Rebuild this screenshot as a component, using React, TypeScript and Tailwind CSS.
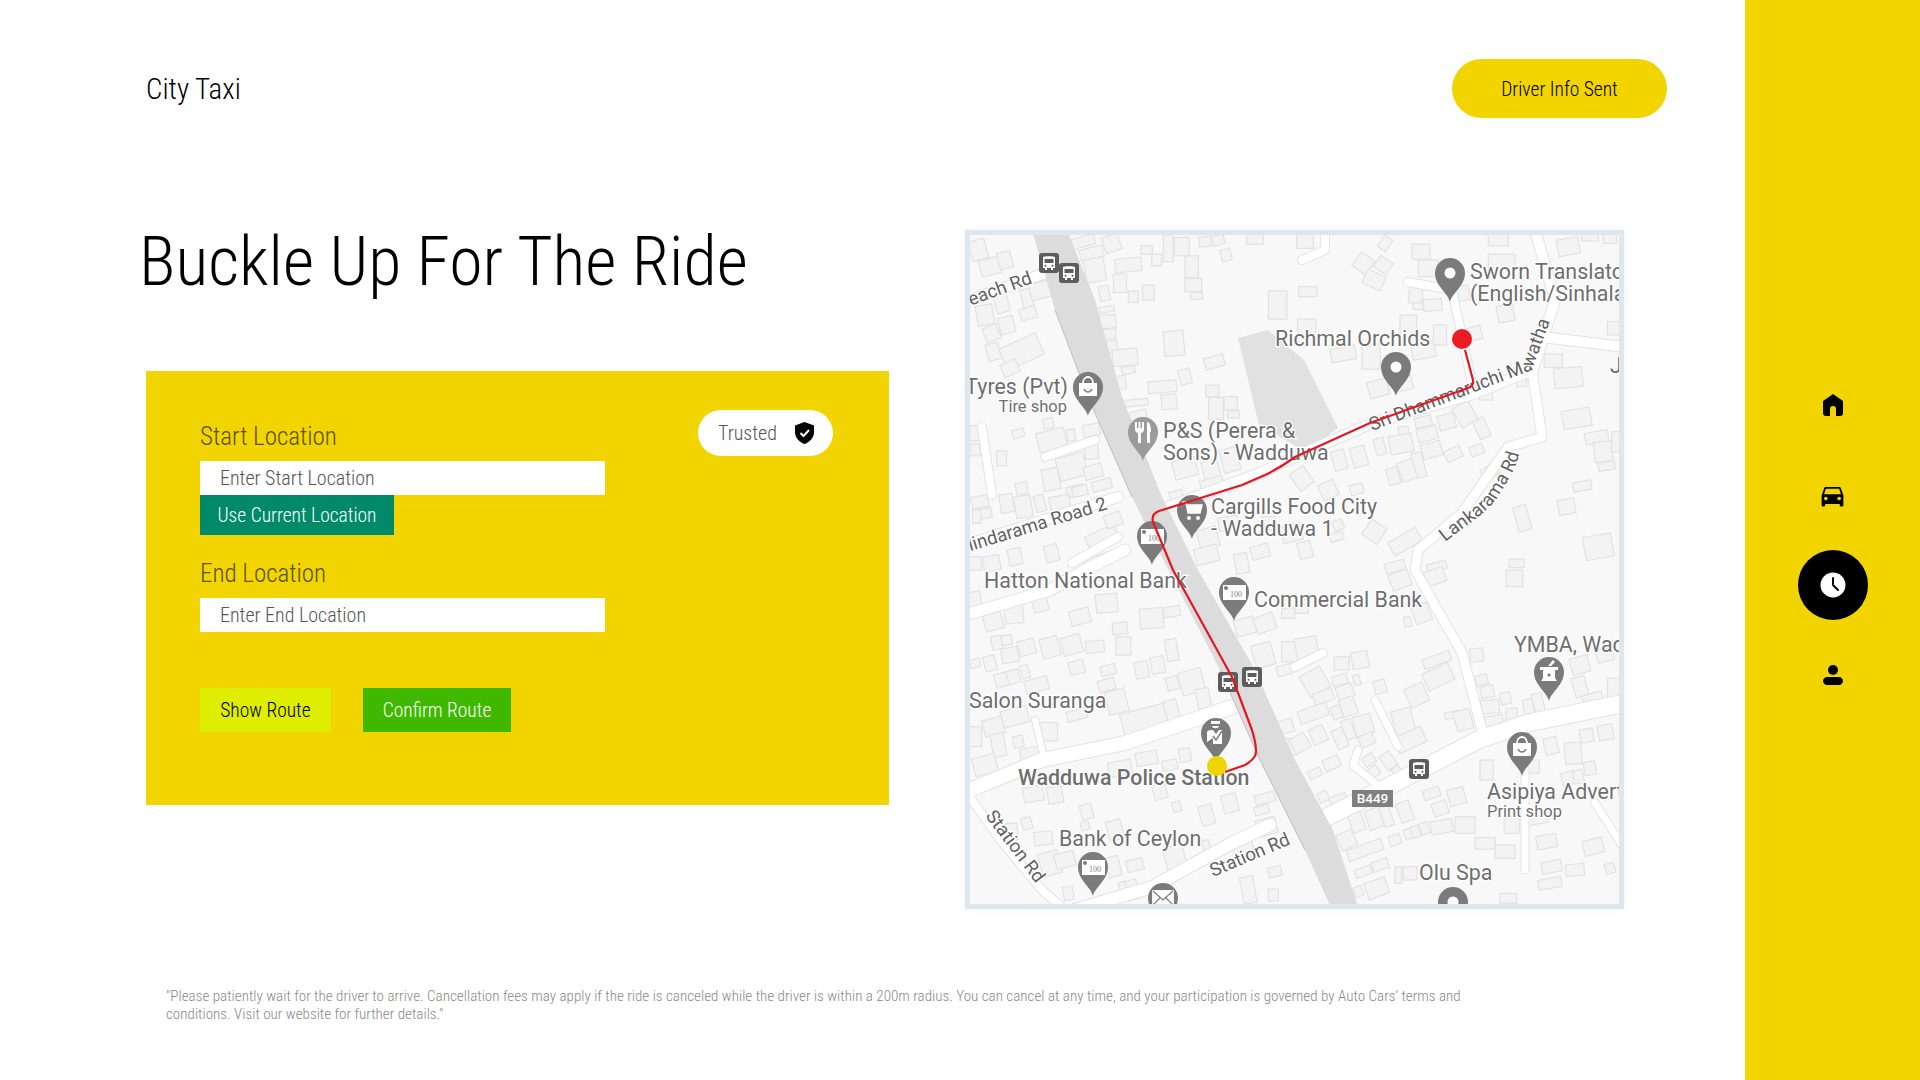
import React from 'react';

const abel = "font-['Roboto'] [font-stretch:75%] font-light";

type Box = [number, number, number, number, number];

// buildings, noted per map quadrant in 3x crop coordinates
const topLeft: Box[] = [
  [40,60,50,60,-15],[75,110,60,50,-15],[120,90,40,50,-15],[60,255,50,60,-10],[125,285,45,50,-15],[80,310,45,45,-20],[85,365,40,50,-15],[170,365,120,70,-25],[135,415,50,40,-25],[110,220,40,55,-15],[185,205,30,55,-15],[190,250,50,35,-15],[230,180,70,50,-15],
  [355,35,70,30,-15],[380,70,70,35,-15],[440,40,50,50,-20],[390,120,60,70,-10],[490,105,80,40,-5],[465,160,40,55,0],[550,188,35,45,0],[505,200,30,35,0],[418,190,30,45,-10],[425,238,45,18,-10],[425,275,55,40,-5],[430,312,45,30,-5],[437,350,40,35,-5],[480,382,75,50,-5],[490,420,40,22,-10],[465,458,35,40,-5],
  [545,60,35,25,0],[575,90,30,35,0],[610,55,30,80,0],[650,50,45,55,0],[680,110,40,65,0],[685,165,50,40,0],[695,198,35,20,0],[720,35,35,30,-5],[760,30,35,30,-15],[783,75,30,35,-15],[870,28,50,30,0],[938,225,55,85,0],
  [627,340,60,75,-5],[748,396,60,35,-15],[660,440,35,45,-15],[592,470,85,35,-5],[612,515,45,45,-5],[742,483,40,35,0],[753,535,45,65,0],[797,520,40,40,0],[805,553,35,22,0],[512,518,75,20,-5],[520,555,50,25,-15],
  [30,610,30,45,0],[30,660,30,35,0],[110,685,30,45,0],[160,610,35,25,-15],[250,580,30,30,-10],[260,630,85,60,-15],[318,615,25,35,-10],[370,638,35,20,-15],[380,600,50,35,-10],[320,710,85,70,-15],[258,748,50,65,-10],[385,725,55,40,-15],[410,765,60,30,-15],[330,782,50,30,-15],[380,665,40,45,-5],
  [660,715,70,55,-15],[740,725,50,70,-15],[795,690,50,70,-15],[635,800,40,35,-15],[740,760,70,30,-15],
  [45,815,50,35,-10],[60,850,40,30,-10],[35,860,25,40,0],[125,820,40,55,-10],[170,775,35,35,-10],[175,830,50,65,-10],[225,820,30,50,-15],[285,820,60,45,-10],[345,783,45,30,-15],
  [410,920,95,40,-25],[445,870,50,40,-20],[405,990,100,30,-20],[730,925,60,60,-15],[725,975,70,50,-15],[830,1000,40,60,-10],[885,965,55,40,-15],[790,880,60,40,-10],[910,880,40,40,0],[980,910,60,50,-15],[80,1000,50,45,-10],[30,1000,40,40,0],[150,980,40,50,-10],[260,970,40,50,-15],
];
const topRight: Box[] = [
  [30,30,50,50,0],[205,100,50,50,35],[265,105,45,40,35],[237,150,60,45,25],[270,40,30,40,35],[38,185,55,30,0],[378,65,55,45,0],[400,115,60,50,0],[362,195,40,50,5],[370,228,30,20,0],[413,225,55,35,-5],[500,190,45,45,-10],[610,30,60,35,0],[620,95,80,45,0],[632,250,50,50,-10],[820,50,65,50,-10],[885,20,50,25,0],[945,25,40,30,0],
  [35,290,55,45,0],[145,372,75,40,-10],[228,380,55,75,0],[340,290,50,70,0],[385,360,70,50,-10],[435,315,40,60,0],[540,310,40,40,-15],[250,475,60,50,-15],[330,460,45,40,-15],
  [775,392,55,40,0],[820,443,85,60,-5],[845,565,85,55,-10],[905,622,70,35,-10],[925,665,55,60,-5],[935,708,50,25,-10],[965,635,30,60,0],[960,295,45,40,0],
  [573,495,40,30,0],[680,455,30,30,0],[455,575,50,45,-15],[385,575,50,30,-15],[510,553,55,65,-30],[560,595,35,60,-25],[325,605,30,30,0],
  [255,650,30,50,-15],[318,642,70,55,-10],[397,612,60,40,-15],[410,660,60,45,-15],[475,672,50,35,-25],[545,660,40,30,-20],
  [340,720,55,60,-20],[295,738,35,50,-15],[372,705,30,75,-15],[585,725,50,35,-30],[133,690,40,60,-15],[192,680,45,60,-15],[20,745,50,60,-35],[100,780,50,50,-25],[185,778,40,30,-15],
  [862,768,55,28,-10],[682,865,40,75,-15],[815,830,50,45,-10],[238,905,55,55,35],[330,935,95,45,-30],[910,950,85,70,-10],[130,885,30,30,-20],[125,920,40,25,-15],[30,960,40,50,-15],[665,1000,45,25,0],[300,1010,60,30,-15],[425,1010,60,25,-15],
];
const bottomLeft: Box[] = [
  [30,100,40,70,-10],[85,155,55,50,-15],[147,130,55,60,-5],[225,100,45,50,-15],[345,140,60,45,-15],[425,100,65,55,-5],[465,175,45,35,-5],[560,145,70,60,-5],[620,125,50,30,-10],
  [95,218,30,40,-10],[125,210,30,30,-10],[135,255,50,45,-10],[185,232,50,45,-15],[255,232,55,60,-15],[320,225,60,55,-15],[390,230,55,35,-5],[475,228,45,55,0],[620,240,35,65,-10],[30,280,30,25,-15],[75,280,35,45,-15],[110,330,40,40,-15],[145,320,35,40,-15],[180,305,25,40,-15],[215,345,70,40,-15],[335,292,45,40,-15],[430,300,45,30,-15],[425,345,50,35,-15],[530,300,40,50,-10],[578,285,40,50,-10],[622,340,35,40,-15],[680,335,70,70,-15],[715,385,40,60,-10],
  [455,395,60,70,-15],[540,450,140,70,-15],[620,420,40,60,-15],[335,435,60,30,-15],[150,440,80,50,-15],[85,470,60,50,-15],[250,485,55,55,0],[30,500,40,60,0],[100,525,40,70,-10],[160,515,30,35,-10],[200,550,70,35,-10],[60,585,70,55,-15],
  [205,672,60,45,-10],[270,675,45,50,-10],[365,725,35,45,-15],[360,768,25,25,-15],[185,760,30,35,-15],[235,805,55,40,-5],[140,785,35,50,-5],
  [465,595,70,45,-10],[545,565,65,40,-10],[615,585,45,30,-10],[660,555,35,40,-10],[585,665,40,45,-15],[635,710,25,30,-15],[725,735,40,60,-15],[795,700,45,55,-15],[890,720,45,25,-15],[900,685,60,30,-15],[905,770,60,50,-15],
  [255,880,60,70,-15],[300,870,60,45,-15],[450,780,45,60,-15],[445,890,40,60,-15],[510,885,50,35,-15],[630,865,60,75,-15],[725,835,20,50,-10],[835,835,60,65,-15],[930,905,40,30,-15],[925,975,30,35,0],[850,960,40,80,-10],[500,960,40,60,-15],[475,960,20,50,-15],[310,970,30,40,-10],[430,990,30,30,-15],
  [895,255,60,70,-15],[975,245,50,60,0],[840,170,60,50,-15],[900,160,60,50,-20],[970,130,40,30,0],[960,300,50,30,-15],[960,470,50,40,-15],[975,530,40,50,0],
];
const bottomRight: Box[] = [
  [20,110,40,40,0],[35,235,65,65,-10],[140,280,45,40,0],[195,270,50,50,-10],[60,335,70,70,-30],[85,380,60,35,-20],[135,330,45,30,-15],[185,330,20,30,-15],[255,350,35,40,-15],[150,365,50,40,-20],[160,410,45,55,-20],[55,430,90,40,-20],[125,427,30,40,-20],[205,465,55,60,-15],[160,478,30,60,-20],[215,510,45,35,-25],[135,505,35,60,-25],[70,495,45,50,-25],[325,455,60,75,-15],[365,375,60,60,-25],[430,320,85,55,-25],[425,270,85,30,-20],[345,510,90,50,-25],[110,580,50,35,-25],[280,572,35,50,-35],[222,570,35,30,-35],[237,605,30,30,-35],[305,603,25,25,-35],
  [15,520,50,50,-30],[60,610,40,25,-25],[85,680,30,30,-25],[130,690,50,30,-20],[185,755,40,60,-20],[240,745,50,60,-20],[275,740,30,60,-20],[330,725,40,60,-20],[410,670,50,30,-20],[485,680,50,50,-15],[435,715,45,40,-20],[210,840,110,35,-20],[155,810,50,50,-25],[255,885,50,30,-20],[205,905,50,25,-20],[245,955,65,50,-20],[190,965,25,30,-20],[310,915,20,50,0],[345,910,40,40,0],[300,810,35,30,-20],[345,790,35,30,-20],[362,785,25,35,-20],[388,775,25,35,-20],[440,770,65,40,-10],[510,765,60,50,0],[570,820,60,35,0],[630,845,60,40,0],
  [338,155,20,30,-10],[380,130,50,55,-20],[545,255,40,40,-5],[560,330,35,30,-15],[577,365,40,35,-10],[585,410,55,40,-5],[595,460,60,45,-10],[632,385,30,35,-10],[650,440,35,50,0],[700,410,30,45,-10],[730,400,30,60,-15],[470,435,40,20,-10],[505,450,50,60,-15],[855,285,55,50,-15],[855,350,40,60,-15],[895,395,60,50,-15],[960,355,45,60,0],[930,255,50,40,-15],[658,25,50,50,0],
  [575,600,40,60,0],[715,590,35,40,0],[768,527,40,50,-15],[835,550,50,65,-5],[820,625,40,40,-15],[850,620,30,40,-10],[885,595,35,40,-10],[875,497,40,40,-10],[932,487,45,45,-10],[755,815,60,40,-10],[770,890,60,35,-10],[840,900,55,35,-5],[765,940,70,30,-10],[895,830,60,45,-15],[945,895,30,30,-15],[650,765,45,50,0],[725,750,70,25,-10],[640,985,50,30,0],[420,20,60,45,-20],[315,30,60,50,-20],
];

const buildings: Box[] = [
  ...topLeft.map(([x, y, w, h, r]): Box => [x / 3, y / 3, w / 3, h / 3, r]),
  ...topRight.map(([x, y, w, h, r]): Box => [330 + x / 3, y / 3, w / 3, h / 3, r]),
  ...bottomLeft.map(([x, y, w, h, r]): Box => [x / 3, 340 + y / 3, w / 3, h / 3, r]),
  ...bottomRight.map(([x, y, w, h, r]): Box => [330 + x / 3, 340 + y / 3, w / 3, h / 3, r]),
];

const roads: [string, number][] = [
  ['M0 72 L83 42', 10],
  ['M0 315 L153 267', 10],
  ['M17 197 L27 265', 8],
  ['M80 227 L130 210', 8],
  ['M107 333 L153 307', 8],
  ['M195 280 L290 245 L330 227 L407 193 L505 165 L568 140 L590 70 L570 0', 10],
  ['M443 52 L487 60 L507 153', 8],
  ['M577 107 L660 117', 10],
  ['M567 140 L577 207 L543 217 L497 283 L453 320 L450 340 L480 393 L497 423 L517 500', 9],
  ['M350 593 L430 553 L513 510 L563 493 L660 473', 17],
  ['M0 562 L77 530 L160 513 L267 477', 14],
  ['M0 385 L85 360 L120 340 L160 320', 11],
  ['M0 560 L33 607 L77 660 L100 680', 8],
  ['M110 680 L187 657 L267 613 L305 595', 12],
  ['M360 0 L360 20 L337 30', 8],
  ['M410 470 L433 517', 7],
  ['M393 520 L388 535 L410 553', 7],
  ['M560 540 L560 640', 7],
  ['M630 573 L660 620', 7],
  ['M70 490 L78 523', 6],
  ['M330 437 L358 423', 8],
];

const Pin = ({ x, y, fill = '#7b7b7b', children }: { x: number; y: number; fill?: string; children?: React.ReactNode }) => (
  <g transform={`translate(${x} ${y})`}>
    <path d="M0 29 C-2 20 -15 13 -15 0 A15 15 0 0 1 15 0 C15 13 2 20 0 29 Z" fill={fill} />
    {children}
  </g>
);

const Dot = () => <circle r="5.5" fill="#fff" />;
const Bag = () => (
  <g>
    <path d="M-9 -4 H9 V9 H-9 Z" fill="#fff" />
    <path d="M-5 -4 C-5 -12 5 -12 5 -4" fill="none" stroke="#fff" strokeWidth="1.8" />
    <path d="M-4 2 C-2 6 2 6 4 2" fill="none" stroke="#7b7b7b" strokeWidth="1.6" />
  </g>
);
const Note = () => (
  <g>
    <rect x="-11" y="-7" width="23" height="15" fill="#fff" />
    <circle cx="-8" cy="-4" r="2" fill="#7b7b7b" />
    <text x="2" y="5" fontSize="8" fill="#7b7b7b" fontFamily="Liberation Serif, serif" textAnchor="middle">100</text>
  </g>
);
const Fork = () => (
  <path d="M-8 -10 V-3 C-8 0 -6 1 -5 1 V11 H-2 V1 C-1 1 1 0 1 -3 V-10 H-1 V-4 H-2.5 V-10 H-4.5 V-4 H-6 V-10 Z M4 -10 C7 -10 8 -5 8 0 H7 V11 H4 Z" fill="#fff" />
);
const Cart = () => (
  <g>
    <path d="M-10 -8 H-6 L-4 3 H8 L10 -5 H-5" fill="#fff" stroke="#fff" strokeWidth="1.5" />
    <circle cx="-3" cy="8" r="2" fill="#fff" />
    <circle cx="6" cy="8" r="2" fill="#fff" />
  </g>
);
const Mortar = () => (
  <g>
    <path d="M-9 -5 H9 V-2 H6 V6 L8 9 H-8 L-6 6 V-2 H-9 Z M-1 -6 L4 -12 L6 -10 L2 -6 Z" fill="#fff" />
    <circle cy="3" r="1.6" fill="#7b7b7b" />
  </g>
);
const Police = () => (
  <g>
    <path d="M-5 -12 H4 V-9 H-5 Z M-4 -7 H3 C3 -4 -4 -4 -4 -7 Z M-9 9 V0 C-9 -3 -6 -3 -3 -3 L0 1 L3 -3 L6 -3 V11 H-3 L-3 5 Z" fill="#fff" />
    <path d="M-3 3 L0 7 L6 -2" fill="none" stroke="#7b7b7b" strokeWidth="1.4" />
  </g>
);
const Mail = () => (
  <g fill="none" stroke="#fff" strokeWidth="1.8">
    <rect x="-10" y="-7" width="20" height="14" fill="#fff" />
    <path d="M-10 -7 L0 2 L10 -7 M-10 7 L-3 0 M10 7 L3 0" stroke="#7b7b7b" strokeWidth="1.2" />
  </g>
);

const Bus = ({ x, y }: { x: number; y: number }) => (
  <g transform={`translate(${x} ${y})`}>
    <rect x="-10" y="-10" width="20" height="20" rx="3" fill="#5c5c5c" />
    <path d="M-6 -6 C-6 -7 6 -7 6 -6 V5 H4 V7 H2 V5 H-2 V7 H-4 V5 H-6 Z" fill="#fff" />
    <path d="M-4.5 -4 H4.5 V0 H-4.5 Z" fill="#5c5c5c" />
    <circle cx="-3.5" cy="2.7" r="1" fill="#5c5c5c" />
    <circle cx="3.5" cy="2.7" r="1" fill="#5c5c5c" />
  </g>
);

const Label = ({ x, y, size = 21.4, weight = 400, anchor = 'start', rotate = 0, fill = '#6e6e6e', children }: { x: number; y: number; size?: number; weight?: number; anchor?: 'start' | 'end'; rotate?: number; fill?: string; children: string }) => (
  <text
    x={x}
    y={y}
    fontSize={size}
    fontWeight={weight}
    textAnchor={anchor}
    transform={rotate ? `rotate(${rotate} ${x} ${y})` : undefined}
    fill={fill}
    stroke="#fff"
    strokeWidth="2.5"
    paintOrder="stroke"
  >
    {children}
  </text>
);

const RouteMap = () => (
  <svg viewBox="5 5 649 669" className="block h-full w-full font-['Roboto']">
    <rect x="0" y="0" width="660" height="680" fill="#f8f8f8" />
    <path d="M273 108 L303 100 L339 130 L373 198 L341 222 L294 195 Z" fill="#e1e1e1" />
    {buildings.map(([x, y, w, h, r], i) => (
      <rect
        key={i}
        x={x - w / 2}
        y={y - h / 2}
        width={w}
        height={h}
        transform={`rotate(${r} ${x} ${y})`}
        fill="#f3f3f3"
        stroke="#e2e2e2"
        strokeWidth="1.2"
      />
    ))}
    {roads.map(([d, w], i) => (
      <path key={`c${i}`} d={d} fill="none" stroke="#e3e3e3" strokeWidth={w + 2} strokeLinejoin="round" strokeLinecap="round" />
    ))}
    {roads.map(([d, w], i) => (
      <path key={`r${i}`} d={d} fill="none" stroke="#ffffff" strokeWidth={w} strokeLinejoin="round" strokeLinecap="round" />
    ))}
    <path
      d="M67 0 L90 80 L123 167 L167 267 L200 333 L255 440 L295 530 L340 620 L367 680 L394 680 L368 600 L330 530 L290 440 L233 340 L197 267 L157 167 L130 70 L102 0 Z"
      fill="#dcdcdc"
    />
    <path d="M90 80 L123 167 L167 267 M255 440 L295 530 L340 620" fill="none" stroke="#bfbfbf" strokeWidth="1" />

    <Pin x={123} y={157}><Bag /></Pin>
    <Pin x={178} y={202} fill="#9b9b9b"><Fork /></Pin>
    <Pin x={227} y={280}><Cart /></Pin>
    <Pin x={187} y={306}><Note /></Pin>
    <Pin x={269} y={362}><Note /></Pin>
    <Pin x={485} y={43}><Dot /></Pin>
    <Pin x={431} y={137}><Dot /></Pin>
    <Pin x={584} y={442}><Mortar /></Pin>
    <Pin x={557} y={517}><Bag /></Pin>
    <Pin x={251} y={503}><Police /></Pin>
    <Pin x={128} y={637}><Note /></Pin>
    <Pin x={198} y={668}><Mail /></Pin>
    <Pin x={488} y={672}><Dot /></Pin>

    <Label x={68} y={53} size={18.5} anchor="end" rotate={-20} fill="#606060">Beach Rd</Label>
    <Label x={143} y={279} size={18.5} anchor="end" rotate={-17} fill="#606060">Mindarama Road 2</Label>
    <Label x={20} y={586} size={18.5} rotate={53} fill="#606060">Station Rd</Label>
    <Label x={248} y={647} size={18.5} rotate={-23} fill="#606060">Station Rd</Label>
    <Label x={103} y={164} anchor="end">Tyres (Pvt)</Label>
    <Label x={102} y={182} size={16.5} anchor="end">Tire shop</Label>
    <Label x={198} y={208}>P&amp;S (Perera &amp;</Label>
    <Label x={198} y={230}>Sons) - Wadduwa</Label>
    <Label x={310} y={116}>Richmal Orchids</Label>
    <Label x={505} y={49}>Sworn Translators</Label>
    <Label x={505} y={71}>(English/Sinhala</Label>
    <Label x={645} y={143}>J</Label>
    <Label x={246} y={284}>Cargills Food City</Label>
    <Label x={246} y={306}>- Wadduwa 1</Label>
    <Label x={19} y={358}>Hatton National Bank</Label>
    <Label x={289} y={377}>Commercial Bank</Label>
    <Label x={4} y={478}>Salon Suranga</Label>
    <Label x={53} y={555} weight={500}>Wadduwa Police Station</Label>
    <Label x={94} y={616}>Bank of Ceylon</Label>
    <Label x={454} y={650}>Olu Spa</Label>
    <Label x={549} y={422}>YMBA, Wadduwa</Label>
    <Label x={522} y={569}>Asipiya Advertising</Label>
    <Label x={522} y={587} size={16.5}>Print shop</Label>

    <path id="sriRoad" d="M407 201 L567 140 L586 88" fill="none" />
    <path id="lankRoad" d="M480 312 C505 292 525 282 537 260 C546 245 553 235 555 218" fill="none" />
    <text fontSize="18.5" fill="#606060" stroke="#fff" strokeWidth="2.5" paintOrder="stroke">
      <textPath href="#sriRoad">Sri Dhammaruchi Mawatha</textPath>
    </text>
    <text fontSize="18.5" fill="#606060" stroke="#fff" strokeWidth="2.5" paintOrder="stroke">
      <textPath href="#lankRoad">Lankarama Rd</textPath>
    </text>

    <rect x="387" y="560" width="41" height="17" fill="#808080" />
    <text x="407.5" y="573" fontSize="13.5" fontWeight="500" textAnchor="middle" fill="#fff">B449</text>

    <Bus x={84} y={33} />
    <Bus x={104} y={43} />
    <Bus x={263} y={452} />
    <Bus x={287} y={447} />
    <Bus x={454} y={539} />

    <path
      d="M500 120 L508 150 Q509 156 503 158 L405 193 L330 227 Q315 238 300 245 L277 255 L194 281 Q186 284 188 292 L208 340 L267 447 L287 500 Q293 520 290 526 Q287 531 280 535 L260 542"
      fill="none"
      stroke="#e8141f"
      strokeWidth="2.2"
      strokeLinejoin="round"
    />
    <circle cx="497" cy="109" r="10" fill="#ed1c24" />
    <circle cx="252" cy="536" r="10" fill="#f0d400" />
  </svg>
);

const Navigation = () => (
  <aside className="flex h-screen w-[175px] flex-col items-center bg-[#f1d400] pt-[360px]">
    <div className="flex h-[90px] items-center justify-center">
      <svg width="20" height="22" viewBox="0 0 20 22">
        <path d="M10 0 L20 7 V19 a3 3 0 0 1-3 3 H13 V15 a3 3 0 0 0-6 0 V22 H3 a3 3 0 0 1-3-3 V7 Z" />
      </svg>
    </div>
    <div className="flex h-[90px] items-center justify-center">
      <svg width="29" height="29" viewBox="0 0 24 24">
        <path d="M18.92 6.01C18.72 5.42 18.16 5 17.5 5h-11c-.66 0-1.21.42-1.42 1.01L3 12v8c0 .55.45 1 1 1h1c.55 0 1-.45 1-1v-1h12v1c0 .55.45 1 1 1h1c.55 0 1-.45 1-1v-8l-2.08-5.99zM6.5 16c-.83 0-1.5-.67-1.5-1.5S5.67 13 6.5 13s1.5.67 1.5 1.5S7.33 16 6.5 16zm11 0c-.83 0-1.5-.67-1.5-1.5s.67-1.5 1.5-1.5 1.5.67 1.5 1.5-.67 1.5-1.5 1.5zM5 11l1.5-4.5h11L19 11H5z" />
      </svg>
    </div>
    <div className="flex h-[90px] items-center justify-center">
      <div className="flex h-[70px] w-[70px] items-center justify-center rounded-full bg-black">
        <svg width="26" height="26" viewBox="0 0 26 26">
          <circle cx="13" cy="13" r="12.5" fill="#fff" />
          <path d="M13 6 V13 L18 18" fill="none" stroke="#000" strokeWidth="2" strokeLinecap="round" />
        </svg>
      </div>
    </div>
    <div className="flex h-[90px] items-center justify-center">
      <svg width="20" height="20" viewBox="0 0 20 20">
        <circle cx="10" cy="5" r="5" />
        <path d="M4 12 H16 C18 12 20 14 20 16 C20 18 18 20 16 20 H4 C2 20 0 18 0 16 C0 14 2 12 4 12 Z" />
      </svg>
    </div>
  </aside>
);

const RideForm = () => (
  <div className="flex h-[434px] w-[743px] justify-between bg-[#f1d400] pl-[54px] pr-[56px] pt-[39px]">
    <form className="flex w-[405px] flex-col">
      <label htmlFor="start" className={`${abel} flex h-[51px] items-end pb-[12px] text-[25px] leading-none text-[#5b5000]`}>
        Start Location
      </label>
      <input id="start" placeholder="Enter Start Location" className={`${abel} h-[34px] w-full bg-white px-5 text-[20px] outline-none placeholder:text-[#555]`} />
      <button type="button" className={`${abel} h-10 w-[194px] bg-[#008a69] pt-[2px] text-[19.5px] text-white`}>
        Use Current Location
      </button>
      <label htmlFor="end" className={`${abel} flex h-[63px] items-end pb-[12px] text-[25px] leading-none text-[#5b5000]`}>
        End Location
      </label>
      <input id="end" placeholder="Enter End Location" className={`${abel} h-[34px] w-full bg-white px-5 text-[20px] outline-none placeholder:text-[#555]`} />
      <div className="mt-14 flex gap-8">
        <button type="button" className={`${abel} h-11 w-[131px] bg-[#dfee00] pt-[2px] text-[19.5px] text-black`}>
          Show Route
        </button>
        <button type="button" className={`${abel} h-11 w-[148px] bg-[#3eb900] pt-[2px] text-[19.5px] text-white`}>
          Confirm Route
        </button>
      </div>
    </form>
    <div className="flex h-[46px] w-[135px] items-center justify-between rounded-full bg-white pl-5 pr-[19px]">
      <span className={`${abel} text-[20px] text-[#555]`}>Trusted</span>
      <svg width="19" height="22" viewBox="0 0 19 22">
        <path d="M9.5 0 L19 3.5 V10 C19 15.5 15 20 9.5 22 C4 20 0 15.5 0 10 V3.5 Z" />
        <path d="M5.5 11 L8.5 14 L14 8" fill="none" stroke="#fff" strokeWidth="2" />
      </svg>
    </div>
  </div>
);

export default function App() {
  return (
    <div className="flex h-screen w-full overflow-hidden bg-white text-black">
      <main className="flex min-w-0 flex-1 flex-col">
        <header className="mt-[59px] flex h-[59px] items-center justify-between pl-[146px] pr-[78px]">
          <span className={`${abel} pt-[2px] text-[29px]`}>City Taxi</span>
          <button type="button" className={`${abel} h-[59px] w-[215px] rounded-full bg-[#f1d400] pt-[2px] text-[19.5px] text-black`}>
            Driver Info Sent
          </button>
        </header>
        <section className="mt-[112px] flex gap-[76px] pl-[146px]">
          <div className="flex flex-col">
            <div className="h-[141px] pt-[6px]">
              <h1 className={`${abel} -ml-[7px] whitespace-nowrap text-[68px] leading-[52px]`}>Buckle Up For The Ride</h1>
            </div>
            <RideForm />
          </div>
          <div className="h-[679px] w-[659px] overflow-hidden border-[5px] border-[#dfe7ee] shadow-[0_0_8px_rgba(0,0,0,0.06)]">
            <RouteMap />
          </div>
        </section>
        <p className={`${abel} ml-[166px] mt-[78px] w-[1320px] text-[15.1px] leading-[18px] text-[#888]`}>
          "Please patiently wait for the driver to arrive. Cancellation fees may apply if the ride is canceled while the driver is within a 200m radius. You can cancel at any time, and your participation is governed by Auto Cars' terms and conditions. Visit our website for further details."
        </p>
      </main>
      <Navigation />
    </div>
  );
}
